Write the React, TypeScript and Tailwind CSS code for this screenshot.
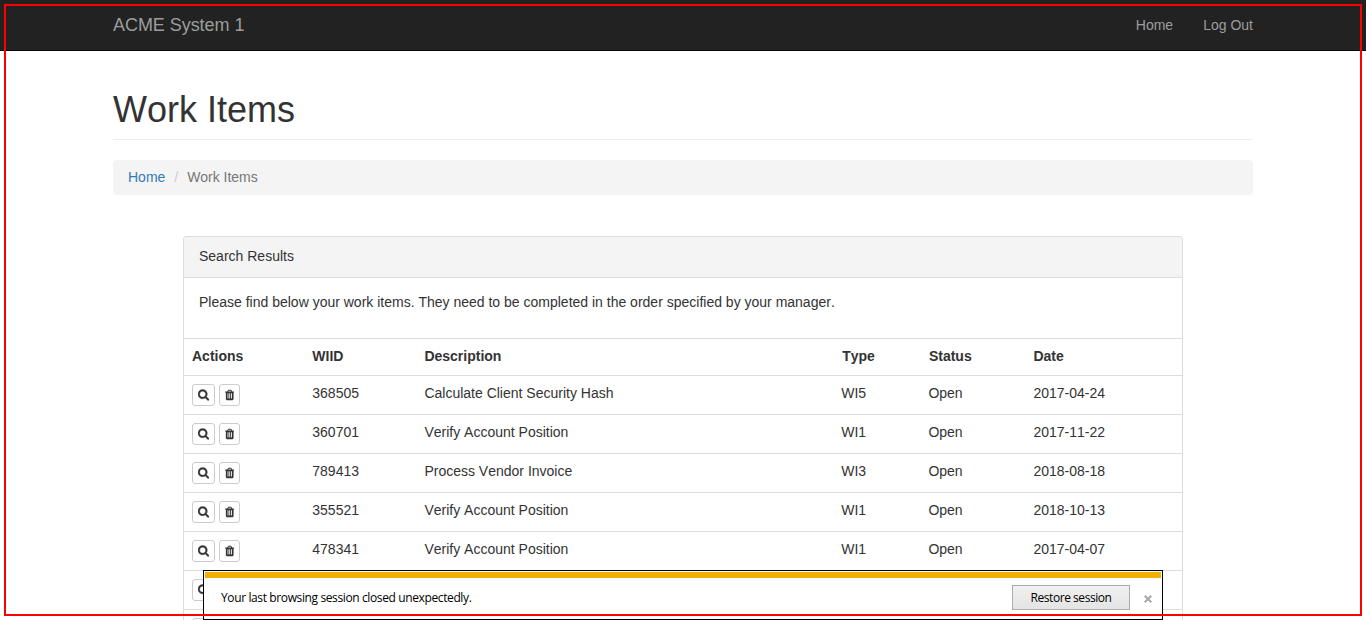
import React from "react";

type WorkItem = {
  wiid: string;
  description: string;
  type: string;
  status: string;
  date: string;
};

const items: WorkItem[] = [
  { wiid: "368505", description: "Calculate Client Security Hash", type: "WI5", status: "Open", date: "2017-04-24" },
  { wiid: "360701", description: "Verify Account Position", type: "WI1", status: "Open", date: "2017-11-22" },
  { wiid: "789413", description: "Process Vendor Invoice", type: "WI3", status: "Open", date: "2018-08-18" },
  { wiid: "355521", description: "Verify Account Position", type: "WI1", status: "Open", date: "2018-10-13" },
  { wiid: "478341", description: "Verify Account Position", type: "WI1", status: "Open", date: "2017-04-07" },
  { wiid: "", description: "", type: "", status: "", date: "" },
  { wiid: "", description: "", type: "", status: "", date: "" },
];

const columns = "grid grid-cols-[120.3px_112.1px_416.8px_87.2px_105px_156.600px] border-t border-[#ddd]";

function SearchIcon() {
  return (
    <svg viewBox="0 64 1664 1792" className="h-3 w-[11px]" fill="currentColor" stroke="currentColor" strokeWidth="50">
      <path d="M1152 832q0-185-131.500-316.500T704 384 387.500 515.500 256 832t131.500 316.500T704 1280t316.500-131.500T1152 832zm512 832q0 52-38 90t-90 38q-54 0-90-38l-343-342q-179 124-399 124-143 0-273.500-55.500t-225-150-150-225T0 832t55.500-273.500 150-225 225-150T704 128t273.500 55.500 225 150 150 225T1408 832q0 220-124 399l343 343q37 37 37 90z" />
    </svg>
  );
}

function TrashIcon() {
  return (
    <svg viewBox="0 0 1408 1792" className="h-3 w-[9.43px]" fill="currentColor">
      <path d="M512 1376V672q0-14-9-23t-23-9h-64q-14 0-23 9t-9 23v704q0 14 9 23t23 9h64q14 0 23-9t9-23zm256 0V672q0-14-9-23t-23-9h-64q-14 0-23 9t-9 23v704q0 14 9 23t23 9h64q14 0 23-9t9-23zm256 0V672q0-14-9-23t-23-9h-64q-14 0-23 9t-9 23v704q0 14 9 23t23 9h64q14 0 23-9t9-23zM480 384h448l-48-117q-7-9-17-11H546q-10 2-17 11zm928 32v64q0 14-9 23t-23 9h-96v948q0 83-47 143.500t-113 60.500H288q-66 0-113-58.500T128 1464V512H32q-14 0-23-9t-9-23v-64q0-14 9-23t23-9h309l70-167q15-37 54-63t79-26h320q40 0 79 26t54 63l70 167h309q14 0 23 9t9 23z" />
    </svg>
  );
}

function Row({ item }: { item: WorkItem }) {
  return (
    <div className={`${columns} h-[39px] pt-[7px]`}>
      <div className="flex gap-1 pl-2 pt-px">
        <button className="flex h-[22px] w-[23px] items-center justify-center rounded-[3px] border border-[#ccc] bg-white">
          <SearchIcon />
        </button>
        <button className="flex h-[22px] w-[21px] items-center justify-center rounded-[3px] border border-[#ccc] bg-white">
          <TrashIcon />
        </button>
      </div>
      <div className="pl-2">{item.wiid}</div>
      <div className="pl-2">{item.description}</div>
      <div className="pl-2">{item.type}</div>
      <div className="pl-2">{item.status}</div>
      <div className="pl-2">{item.date}</div>
    </div>
  );
}

export default function App() {
  return (
    <div className="relative h-[620px] w-[1366px] overflow-hidden bg-white font-['Liberation_Sans',Arial,sans-serif] text-[14px] leading-5 text-[#333]">
      <nav className="h-[51px] border-b border-[#080808] bg-[#222] text-[#9d9d9d]">
        <div className="mx-auto flex w-[1140px] justify-between pt-[15px]">
          <span className="text-[18px] leading-5 tracking-[-0.05px]">ACME System 1</span>
          <div className="flex gap-[30px]">
            <span>Home</span>
            <span>Log Out</span>
          </div>
        </div>
      </nav>

      <main className="mx-auto w-[1140px]">
        <h1 className="mt-[38px] h-[51px] border-b border-[#eee] pt-px text-[36px] font-normal leading-10 [font-kerning:none]">Work Items</h1>
        <div className="mt-5 flex h-[35px] rounded-[4px] bg-[#f4f4f4] px-[15px] pt-[7px]">
          <span className="text-[#337ab7]">Home</span>
          <span className="px-[9px] text-[#ccc]">/</span>
          <span className="text-[#777]">Work Items</span>
        </div>

        <section className="mx-auto mt-[41px] w-[1000px] rounded-t-[4px] border border-b-0 border-[#ddd] [font-kerning:none]">
          <div className="h-[41px] rounded-t-[3px] border-b border-[#ddd] bg-[#f4f4f4] px-[15px] pt-[9px]">Search Results</div>
          <p className="h-[60px] px-[15px] pt-[14px]">
            Please find below your work items. They need to be completed in the order specified by your manager.
          </p>
          <div className={`${columns} h-[37px] pt-[7px] font-bold`}>
            <div className="pl-2">Actions</div>
            <div className="pl-2">WIID</div>
            <div className="pl-2">Description</div>
            <div className="pl-[9px]">Type</div>
            <div className="pl-[8.5px]">Status</div>
            <div className="pl-2">Date</div>
          </div>
          {items.map((item, i) => (
            <Row key={i} item={item} />
          ))}
        </section>
      </main>

      <div className="absolute left-[203px] top-[570px] h-[50px] w-[960px] border border-black bg-white p-px font-['Open_Sans','Noto_Sans',sans-serif] text-[12px] text-black">
        <div className="h-[6px] bg-[#f2b100]" />
        <div className="flex h-[39px] items-center pl-4 pr-[9px]">
          <span className="grow pt-px tracking-[-0.38px]">Your last browsing session closed unexpectedly.</span>
          <button className="mr-[14px] h-[25px] w-[118px] border border-[#acacac] bg-linear-to-b from-[#f0f0f0] to-[#e4e4e4] pt-px tracking-[-0.45px]">
            Restore session
          </button>
          <svg viewBox="0 0 8 8" className="mt-[3px] h-2 w-2" stroke="#a8a8a8" strokeWidth="2">
            <path d="M0.700 0.700L7.300 7.300M7.300 0.700L0.700 7.300" />
          </svg>
        </div>
      </div>

      <div className="pointer-events-none absolute left-1 top-1 h-[612px] w-[1358px] border-2 border-[#f00]" />
    </div>
  );
}
